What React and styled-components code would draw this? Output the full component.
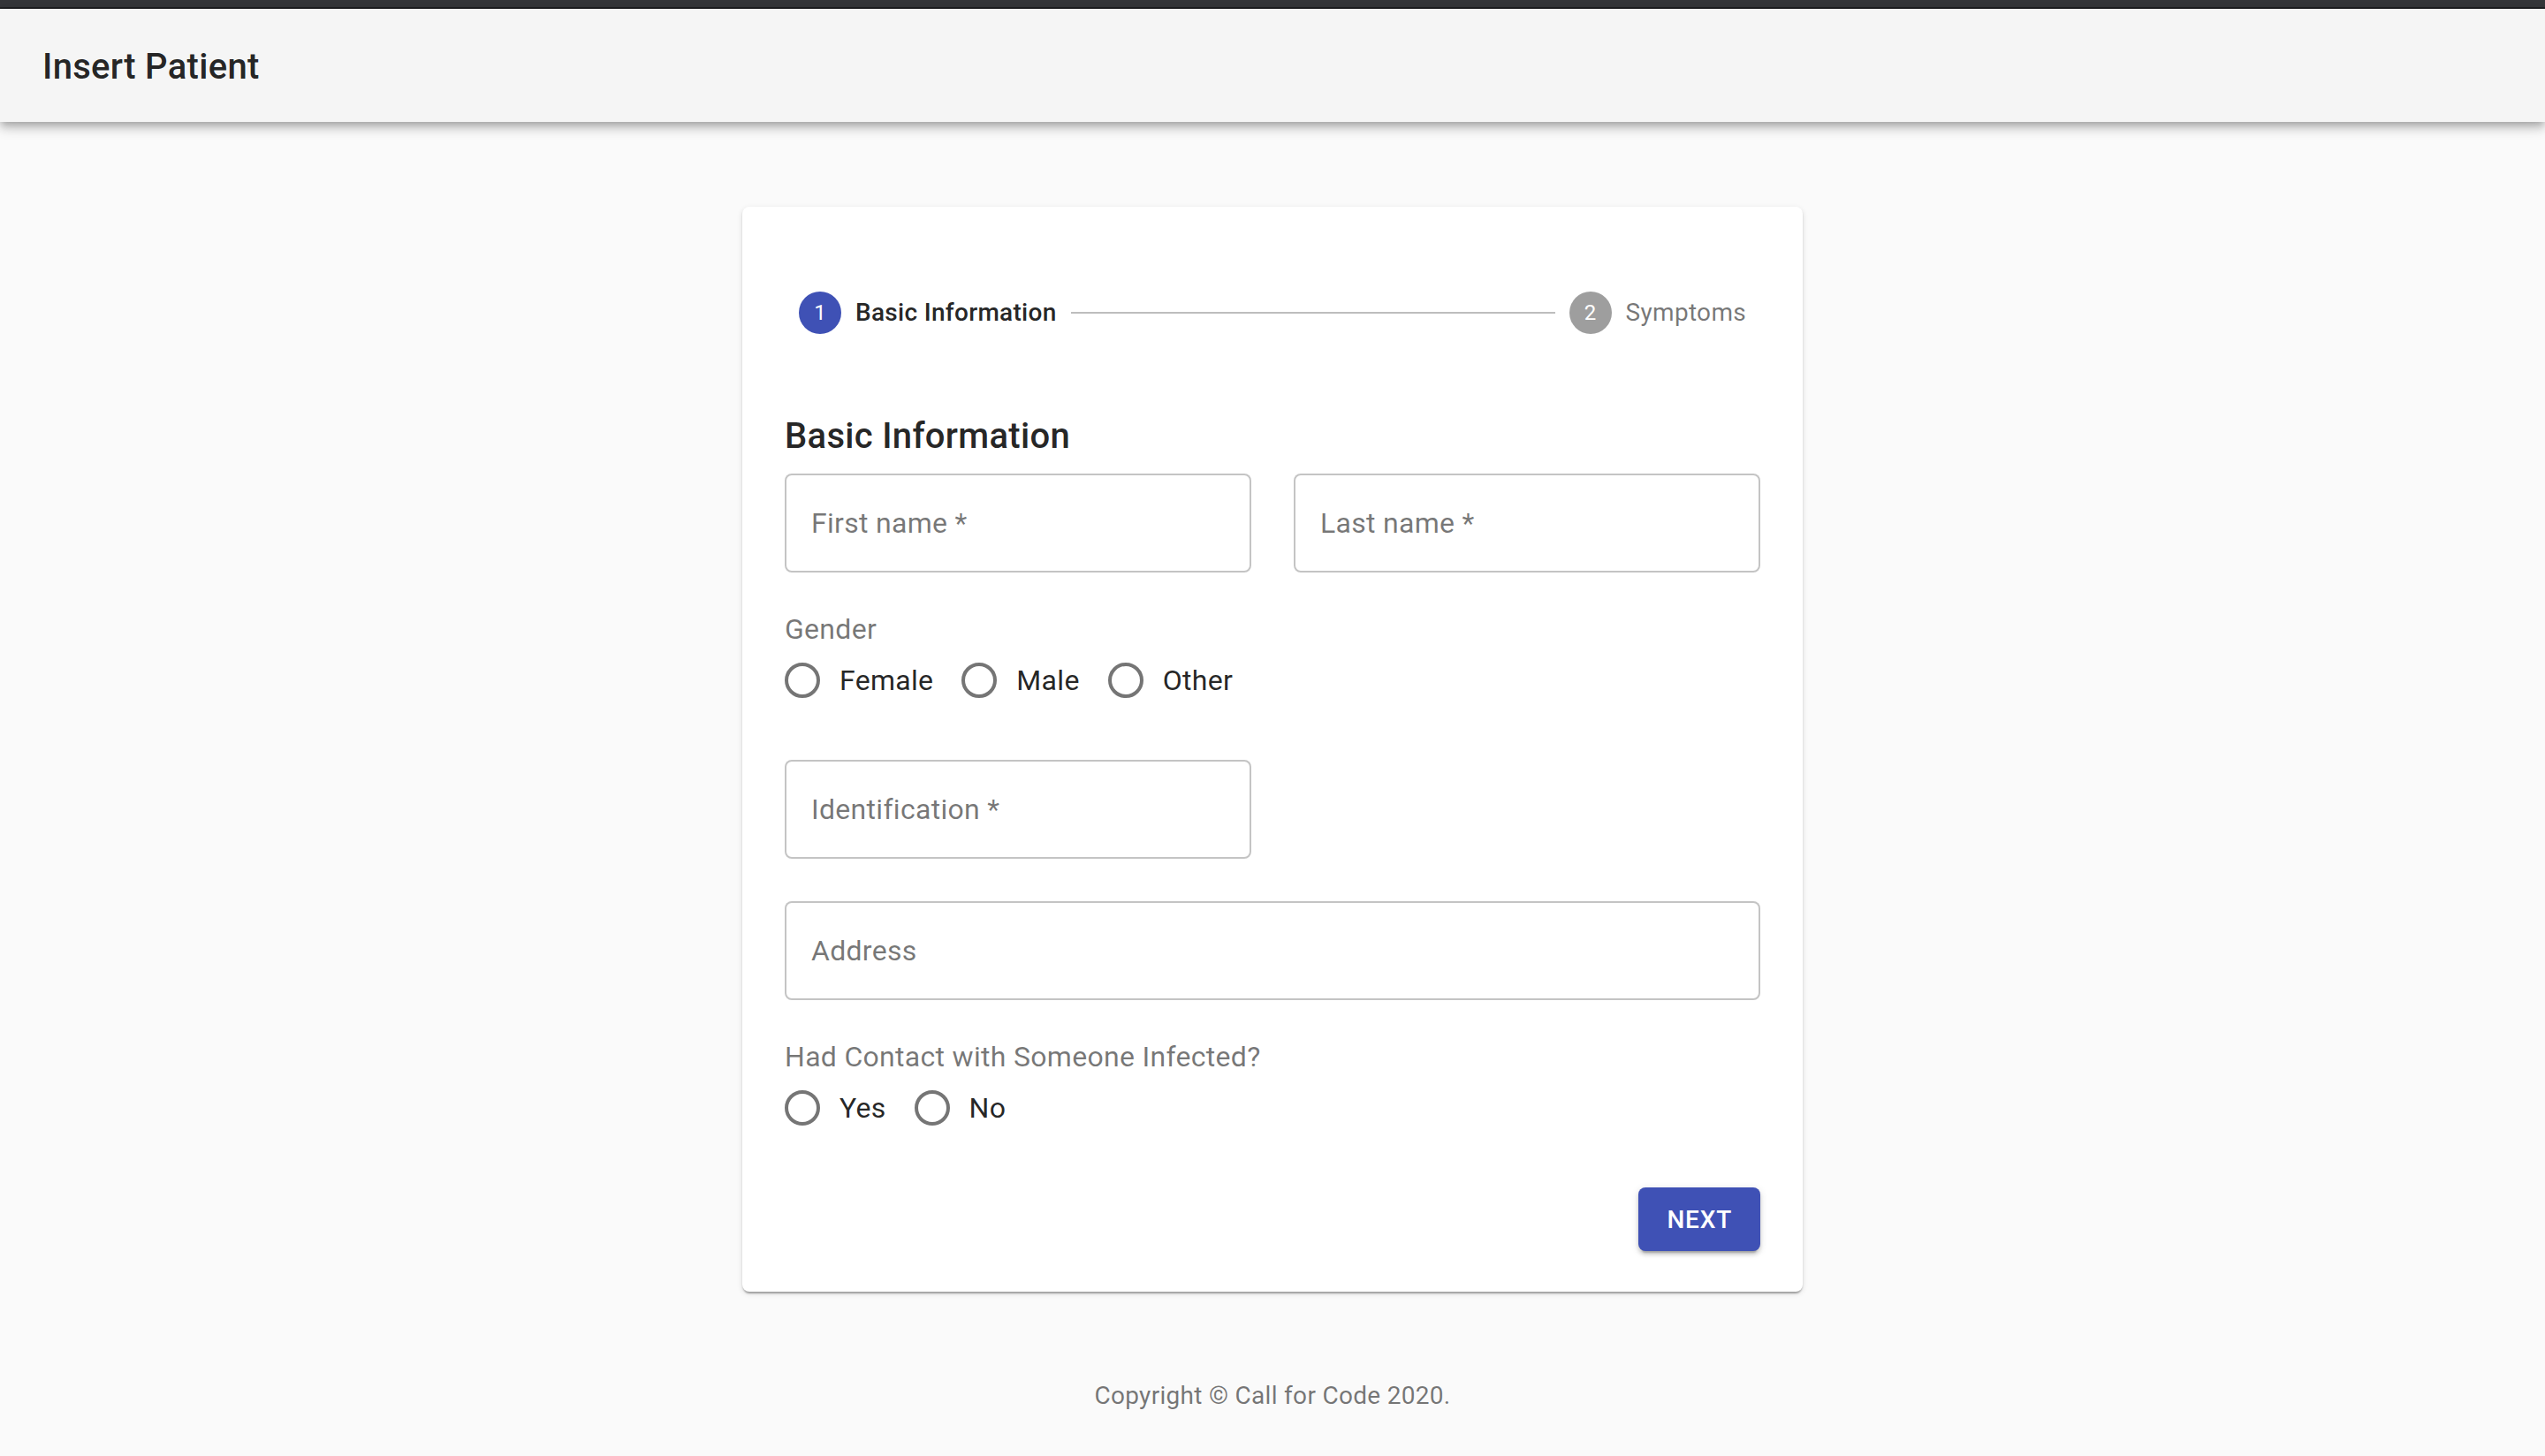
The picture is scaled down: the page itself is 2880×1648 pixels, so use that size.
import React from "react";
import styled, { createGlobalStyle } from "styled-components";

const GlobalStyle = createGlobalStyle`
  html, body {
    margin: 0;
    padding: 0;
    background: #fafafa;
    font-family: Roboto, "Liberation Sans", Arial, sans-serif;
    color: rgba(0, 0, 0, 0.87);
  }
  * { box-sizing: border-box; }
`;

const steps = ["Basic Information", "Symptoms"];

const genders = ["Female", "Male", "Other"];
const contact = ["Yes", "No"];

function RadioOption({ label }) {
  return (
    <OptionLabel>
      <RadioBox>
        <RadioRing />
      </RadioBox>
      <OptionText>{label}</OptionText>
    </OptionLabel>
  );
}

export default function App() {
  const activeStep = 0;

  return (
    <>
      <GlobalStyle />
      <TopStrip />
      <AppBar>
        <Title>Insert Patient</Title>
      </AppBar>

      <Card>
        <Stepper>
          {steps.map((step, i) => (
            <React.Fragment key={step}>
              {i > 0 && <Connector />}
              <Step>
                <StepIcon active={i === activeStep}>{i + 1}</StepIcon>
                <StepLabel active={i === activeStep}>{step}</StepLabel>
              </Step>
            </React.Fragment>
          ))}
        </Stepper>

        <FormBody>
          <Heading>Basic Information</Heading>
          <FormGrid>
            <TwoCols>
              <Field placeholder="First name *" />
              <Field placeholder="Last name *" />
            </TwoCols>

            <Group>
              <GroupLabel>Gender</GroupLabel>
              <RadioRow>
                {genders.map((g) => (
                  <RadioOption key={g} label={g} />
                ))}
              </RadioRow>
            </Group>

            <TwoCols>
              <Field placeholder="Identification *" />
            </TwoCols>

            <Field placeholder="Address" />

            <Group>
              <GroupLabel>Had Contact with Someone Infected?</GroupLabel>
              <RadioRow>
                {contact.map((c) => (
                  <RadioOption key={c} label={c} />
                ))}
              </RadioRow>
            </Group>

            <Actions>
              <NextButton>Next</NextButton>
            </Actions>
          </FormGrid>
        </FormBody>
      </Card>

      <Footer>Copyright © Call for Code 2020.</Footer>
    </>
  );
}

const TopStrip = styled.div`
  height: 10px;
  background: #35363a;
  border-bottom: 2px solid #1f2023;
`;

const AppBar = styled.header`
  position: relative;
  z-index: 2;
  height: 128px;
  display: flex;
  align-items: center;
  padding: 3px 48px 0;
  background: #f5f5f5;
  box-shadow: 0px 4px 8px -2px rgba(0, 0, 0, 0.2),
    0px 8px 10px 0px rgba(0, 0, 0, 0.14), 0px 2px 20px 0px rgba(0, 0, 0, 0.12);
`;

const Title = styled.h1`
  margin: 0;
  font-size: 40px;
  font-weight: 500;
  line-height: 1.6;
  letter-spacing: 0.3px;
  color: rgba(0, 0, 0, 0.87);
`;

const Card = styled.main`
  width: 1200px;
  margin: 96px auto 0;
  padding: 48px 0 46px;
  background: #fff;
  border-radius: 8px;
  box-shadow: 0px 4px 2px -2px rgba(0, 0, 0, 0.2),
    0px 2px 2px 0px rgba(0, 0, 0, 0.14), 0px 2px 6px 0px rgba(0, 0, 0, 0.12);
`;

const Stepper = styled.div`
  display: flex;
  align-items: center;
  padding: 48px;
`;

const Step = styled.div`
  display: flex;
  align-items: center;
  padding: 0 16px;
`;

const StepIcon = styled.div`
  width: 48px;
  height: 48px;
  border-radius: 50%;
  display: flex;
  align-items: center;
  justify-content: center;
  flex-shrink: 0;
  margin-right: 16px;
  font-size: 24px;
  color: #fff;
  background: ${(p) => (p.active ? "#3f51b5" : "rgba(0, 0, 0, 0.38)")};
`;

const StepLabel = styled.span`
  font-size: 28px;
  line-height: 1.43;
  letter-spacing: 0.3px;
  font-weight: ${(p) => (p.active ? 500 : 400)};
  color: ${(p) => (p.active ? "rgba(0, 0, 0, 0.87)" : "rgba(0, 0, 0, 0.54)")};
  white-space: nowrap;
`;

const Connector = styled.div`
  flex: 1 1 auto;
  border-top: 2px solid #bdbdbd;
`;

const FormBody = styled.section`
  padding: 0 48px;
`;

const Heading = styled.h2`
  margin: 36px 0 10px;
  font-size: 40px;
  font-weight: 500;
  line-height: 1.6;
  letter-spacing: 0.3px;
  color: rgba(0, 0, 0, 0.87);
`;

const FormGrid = styled.div`
  display: flex;
  flex-direction: column;
  gap: 48px;
`;

const TwoCols = styled.div`
  display: grid;
  grid-template-columns: 1fr 1fr;
  gap: 48px;
`;

const Field = styled.input`
  display: block;
  width: 100%;
  height: 112px;
  padding: 0 28px;
  border: 2px solid rgba(0, 0, 0, 0.23);
  border-radius: 8px;
  background: #fff;
  font-family: inherit;
  font-size: 32px;
  letter-spacing: 0.3px;
  color: rgba(0, 0, 0, 0.87);
  outline: none;

  &::placeholder {
    color: rgba(0, 0, 0, 0.54);
    opacity: 1;
  }
`;

const Group = styled.div`
  display: flex;
  flex-direction: column;
`;

const GroupLabel = styled.div`
  font-size: 32px;
  line-height: 1;
  letter-spacing: 0.3px;
  color: rgba(0, 0, 0, 0.54);
`;

const RadioRow = styled.div`
  display: flex;
  flex-wrap: wrap;
`;

const OptionLabel = styled.label`
  display: inline-flex;
  align-items: center;
  margin-left: -22px;
  margin-right: 32px;
  cursor: pointer;
`;

const RadioBox = styled.span`
  width: 84px;
  height: 84px;
  padding: 22px;
  display: flex;
`;

const RadioRing = styled.span`
  width: 40px;
  height: 40px;
  border: 4px solid rgba(0, 0, 0, 0.54);
  border-radius: 50%;
`;

const OptionText = styled.span`
  font-size: 32px;
  line-height: 1.5;
  letter-spacing: 0.3px;
  color: rgba(0, 0, 0, 0.87);
`;

const Actions = styled.div`
  display: flex;
  justify-content: flex-end;
`;

const NextButton = styled.button`
  height: 72px;
  min-width: 128px;
  padding: 0 32px;
  border: none;
  border-radius: 8px;
  background: #3f51b5;
  color: #fff;
  font-family: inherit;
  font-size: 28px;
  font-weight: 500;
  letter-spacing: 0.8px;
  text-transform: uppercase;
  cursor: pointer;
  box-shadow: 0px 6px 2px -4px rgba(0, 0, 0, 0.2),
    0px 4px 4px 0px rgba(0, 0, 0, 0.14), 0px 2px 10px 0px rgba(0, 0, 0, 0.12);
`;

const Footer = styled.footer`
  margin-top: 98px;
  text-align: center;
  font-size: 28px;
  line-height: 1.43;
  letter-spacing: 0.3px;
  color: rgba(0, 0, 0, 0.54);
`;
